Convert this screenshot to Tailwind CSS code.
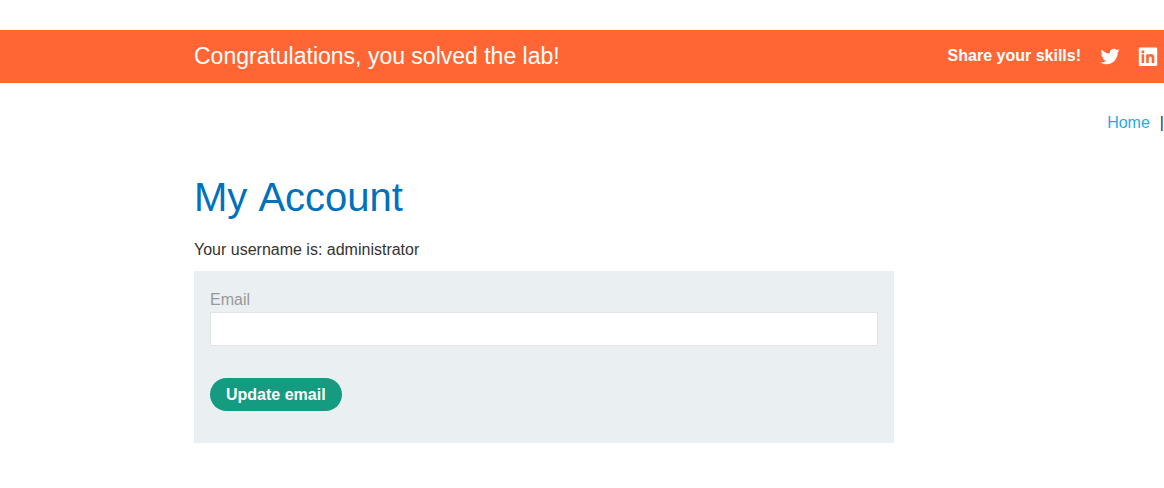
<!DOCTYPE html>
<html lang="en">
<head>
<meta charset="utf-8">
<meta name="viewport" content="width=device-width, initial-scale=1">
<title>My Account</title>
<script src="https://cdn.jsdelivr.net/npm/@tailwindcss/browser@4"></script>
</head>
<body class="overflow-x-hidden bg-white font-['Liberation_Sans',Arial,sans-serif] text-base text-[#333332]">
  <header class="mt-[30px] flex h-[53px] items-center justify-between bg-[#ff6633] pb-[2px] pl-[194px] pr-[5px] text-white">
    <h4 class="text-[23px] leading-7">Congratulations, you solved the lab!</h4>
    <div class="flex items-center">
      <span class="mr-[18px] font-bold">Share your skills!</span>
      <a href="#" aria-label="Share on Twitter" class="mr-4">
        <svg class="size-[22px]" viewBox="0 0 24 24" fill="currentColor" aria-hidden="true"><path d="M22.460 6c-.77.35-1.600.58-2.460.69.88-.53 1.560-1.370 1.880-2.380-.83.5-1.750.85-2.720 1.050C18.370 4.500 17.260 4 16 4c-2.350 0-4.270 1.920-4.270 4.290 0 .34.04.67.11.98C8.280 9.090 5.110 7.380 3 4.790c-.37.63-.58 1.370-.58 2.150 0 1.490.75 2.810 1.910 3.560-.71 0-1.370-.2-1.950-.5v.03c0 2.080 1.480 3.820 3.440 4.210a4.220 4.220 0 0 1-1.930.07 4.280 4.280 0 0 0 4 2.980 8.521 8.521 0 0 1-5.330 1.840c-.34 0-.68-.02-1.020-.06C3.440 20.290 5.700 21 8.120 21 16 21 20.330 14.460 20.330 8.790c0-.19 0-.37-.01-.56.84-.6 1.560-1.360 2.140-2.230z"/></svg>
      </a>
      <a href="#" aria-label="Share on LinkedIn">
        <svg class="size-[22px]" viewBox="0 0 22 22" fill="currentColor" fill-rule="evenodd" aria-hidden="true"><path d="M3 2.500h16a1.200 1.200 0 0 1 1.200 1.200v16a1.200 1.200 0 0 1-1.200 1.200H3a1.200 1.200 0 0 1-1.200-1.200v-16A1.200 1.200 0 0 1 3 2.500zM4.600 9.300v8.700h2.500V9.300zM5.850 5.200a1.500 1.500 0 1 0 0 3 1.500 1.500 0 0 0 0-3zM9.200 9.300v8.700h2.600v-4.600c0-1.300.6-2 1.500-2s1.400.7 1.400 2v4.600h2.600v-5.100c0-2.400-1.200-3.800-3.100-3.800-1.100 0-1.900.5-2.400 1.300V9.300z"/></svg>
      </a>
    </div>
  </header>
  <nav class="mt-7 flex justify-end gap-[10px]">
    <a href="#" class="text-[#29a9e1]">Home</a><span>|</span>
  </nav>
  <main class="pl-[194px]">
    <h1 class="mt-9 text-[40px] leading-[52px] text-[#0071bc] [font-kerning:none]">My Account</h1>
    <p class="mt-[15px] leading-6">Your username is: administrator</p>
    <form class="mt-[9px] max-w-[700px] bg-[#eaeff2] px-4 pt-4 pb-8">
      <label for="email" class="block text-[#999999] leading-[25px]">Email</label>
      <input id="email" type="email" class="block h-[34px] w-full border border-[#e3e4e5] bg-white px-2 outline-none">
      <button type="button" class="mt-8 h-[33px] rounded-full bg-[#159b7f] px-4 font-bold text-white">Update email</button>
    </form>
  </main>
</body>
</html>
